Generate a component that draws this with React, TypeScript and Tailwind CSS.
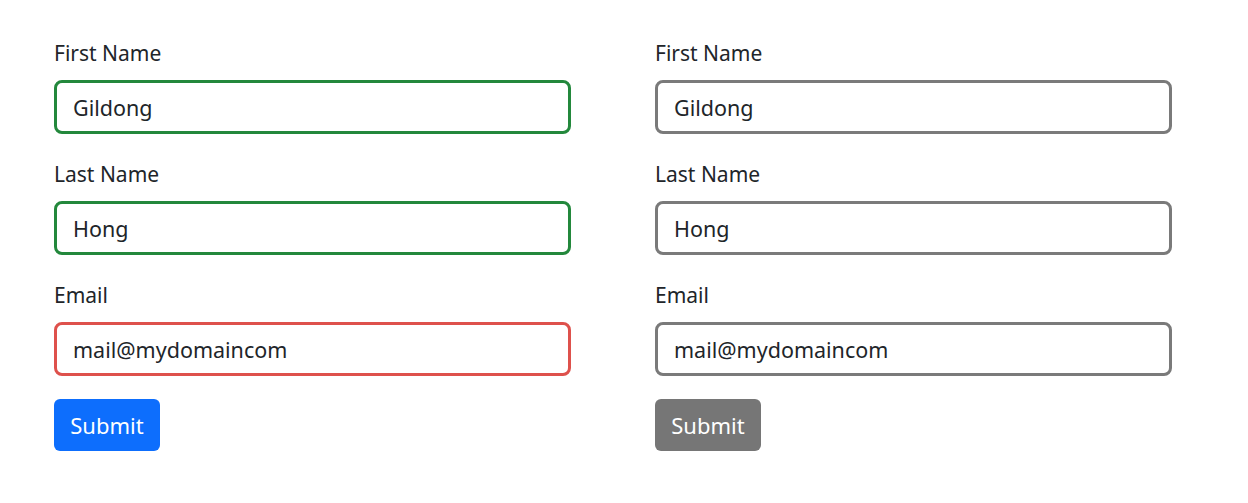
const font = { fontFamily: '"Noto Sans", "Open Sans", sans-serif' };

type Field = { label: string; value: string; tone: string };

function FormColumn({ fields, button }: { fields: Field[]; button: string }) {
  return (
    <form className="flex w-[517px] flex-col" onSubmit={(e) => e.preventDefault()}>
      {fields.map((f, i) => (
        <div key={f.label} className={i === 0 ? "" : "mt-[25px]"}>
          <label className="block text-[21px] leading-[30px] text-[#212529]">{f.label}</label>
          <input
            readOnly
            value={f.value}
            className={`mt-[12px] block h-[54px] w-full rounded-[8px] border-[3px] bg-white px-[16px] text-[21.5px] text-[#212529] outline-none ${f.tone}`}
          />
        </div>
      ))}
      <div className="mt-[23px]">
        <button
          type="submit"
          className={`h-[52px] w-[106px] rounded-[6px] text-[22px] text-white ${button}`}
        >
          Submit
        </button>
      </div>
    </form>
  );
}

export default function App() {
  return (
    <div className="min-h-[503px] bg-white pl-[54px] pt-[38px]" style={font}>
      <div className="flex gap-[84px]">
        <FormColumn
          fields={[
            { label: "First Name", value: "Gildong", tone: "border-[#23883c]" },
            { label: "Last Name", value: "Hong", tone: "border-[#23883c]" },
            { label: "Email", value: "mail@mydomaincom", tone: "border-[#de514c]" },
          ]}
          button="bg-[#0d6efd]"
        />
        <FormColumn
          fields={[
            { label: "First Name", value: "Gildong", tone: "border-[#7a7a7a]" },
            { label: "Last Name", value: "Hong", tone: "border-[#7a7a7a]" },
            { label: "Email", value: "mail@mydomaincom", tone: "border-[#7a7a7a]" },
          ]}
          button="bg-[#767676]"
        />
      </div>
    </div>
  );
}
